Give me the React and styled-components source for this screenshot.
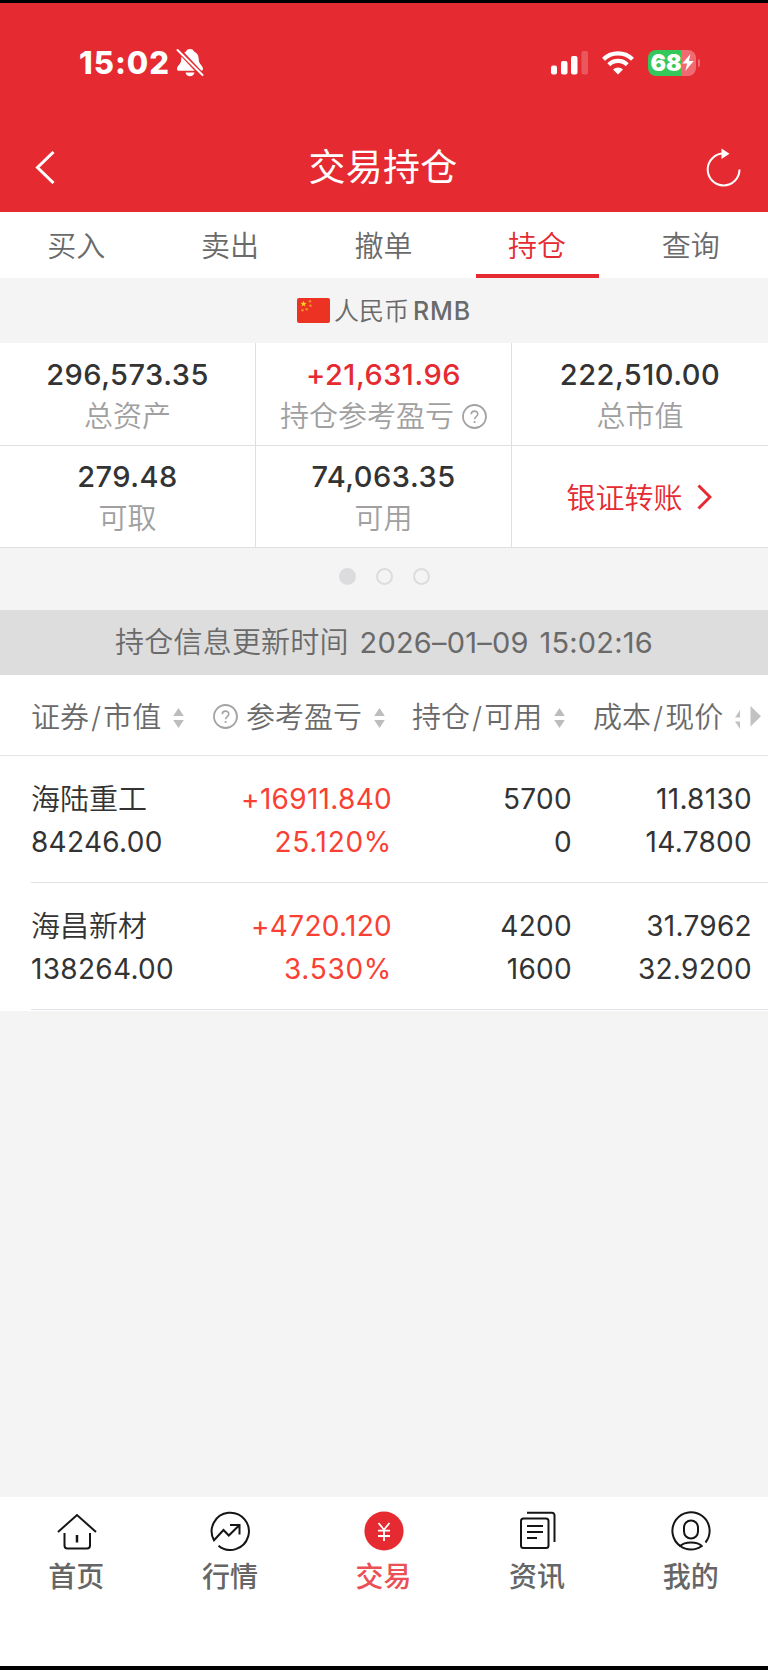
import React, { useState } from 'react';

import styled, { createGlobalStyle, ThemeProvider } from 'styled-components';

const theme = {
  red: '#e52a31',
  rise: '#fa4032',
  ink: '#333333',
  gray: '#6a6a6a',
  silver: '#a0a0a0',
  line: '#dedfe1',
  canvas: '#f4f4f4',
};

const GlobalStyle = createGlobalStyle`
  * {
    box-sizing: border-box;
  }

  body {
    background: #000;
    font-family: Inter, "Noto Sans CJK SC", sans-serif;
    font-size: 29px;
    font-weight: 350;
    margin: 0;
  }

  svg {
    display: block;
    flex: none;
  }
`;

const Screen = styled.div`
  background: ${(props) => props.theme.canvas};
  border-bottom: 4px solid black;
  border-top: 3px solid black;
  display: flex;
  flex-direction: column;
  height: 1670px;
  overflow: hidden;
  width: 768px;
`;

const Header = styled.header`
  background: ${(props) => props.theme.red};
  color: white;
  flex: none;
  height: 209px;
`;

const StatusBar = styled.div`
  align-items: center;
  display: flex;
  height: 119px;
  padding: 0 72px 0 79px;
`;

const Clock = styled.span`
  align-items: center;
  display: flex;
  font-size: 31px;
  font-weight: 800;
  gap: 6px;
  letter-spacing: 1px;
  line-height: 36px;
  margin-right: auto;
`;

const Indicators = styled.div`
  align-items: center;
  display: flex;
  gap: 14px;
`;

const Battery = styled.div`
  align-items: center;
  background: linear-gradient(90deg, #34c759 68%, #ef6b71 68%);
  border-radius: 8px;
  display: flex;
  height: 26px;
  justify-content: center;
  position: relative;
  width: 48px;

  &::after {
    background: #ef6b71;
    border-radius: 0 3px 3px 0;
    content: '';
    height: 8px;
    left: 50px;
    position: absolute;
    top: 9px;
    width: 2px;
  }
`;

const Level = styled.span`
  font-size: 23px;
  font-weight: 900;
  line-height: 26px;
`;

const TitleBar = styled.div`
  align-items: center;
  display: flex;
  height: 90px;
  justify-content: space-between;
  padding: 0 27px 0 35px;
`;

const Title = styled.h1`
  font-size: 37px;
  font-weight: 400;
  letter-spacing: .3px;
  line-height: 44px;
  margin: 0;
  padding: 2px 0 0 5px;
`;

const Tabs = styled.nav`
  background: white;
  display: flex;
  flex: none;
  height: 66px;
`;

const Tab = styled.button`
  align-items: center;
  background: none;
  border: none;
  color: ${(props) => (props.$active ? props.theme.red : props.theme.gray)};
  display: flex;
  flex: 1;
  font: inherit;
  justify-content: center;
  padding: 0 1px 3px 0;
  position: relative;

  &::after {
    background: ${(props) => (props.$active ? props.theme.red : 'transparent')};
    bottom: 0;
    content: '';
    height: 4px;
    left: 10%;
    position: absolute;
    right: 10%;
  }
`;

const Currency = styled.div`
  align-items: center;
  color: ${(props) => props.theme.gray};
  display: flex;
  flex: none;
  font-size: 25px;
  gap: 4px;
  height: 65px;
  justify-content: center;
  line-height: 30px;
`;

const CurrencyCode = styled.span`
  font-weight: 500;
  letter-spacing: .9px;
`;

const Summary = styled.section`
  background: white;
  display: grid;
  flex: none;
  grid-template-columns: repeat(3, 256px);
  grid-template-rows: 103px 102px;
`;

const Cell = styled.div`
  align-items: center;
  border-bottom: 1px solid ${(props) => props.theme.line};
  border-right: 1px solid ${(props) => props.theme.line};
  display: flex;
  flex-direction: column;
  justify-content: center;
  padding-top: 1px;

  &:nth-child(-n + 3) {
    padding-top: 2px;
  }

  &:nth-child(3n) {
    border-right: none;
  }
`;

const Amount = styled.div`
  color: ${(props) => (props.$rise ? props.theme.red : props.theme.ink)};
  font-size: 29px;
  font-weight: 450;
  letter-spacing: .5px;
  line-height: 42px;
`;

const Caption = styled.div`
  align-items: center;
  color: ${(props) => props.theme.silver};
  display: flex;
  gap: 8px;
  line-height: 41px;
`;

const Transfer = styled.a`
  align-items: center;
  color: ${(props) => props.theme.red};
  display: flex;
  gap: 14px;
  padding: 0 2px 2px 0;

  svg {
    margin-top: 2px;
  }
`;

const Dots = styled.div`
  align-items: center;
  display: flex;
  flex: none;
  gap: 20px;
  height: 62px;
  justify-content: center;
  padding-bottom: 5px;
`;

const Dot = styled.span`
  background: ${(props) => (props.$active ? '#dcdcde' : 'transparent')};
  border: 2px solid #dcdcde;
  border-radius: 50%;
  height: 17px;
  width: 17px;
`;

const UpdatedAt = styled.div`
  background: #dddddd;
  color: ${(props) => props.theme.gray};
  flex: none;
  height: 65px;
  letter-spacing: .2px;
  line-height: 65px;
  text-align: center;
  white-space: pre;
  word-spacing: 2.5px;
`;

const Time = styled.time`
  font-weight: 400;
`;

const TableHead = styled.div`
  background: white;
  border-bottom: 1px solid #e4e5e6;
  color: ${(props) => props.theme.gray};
  display: grid;
  flex: none;
  grid-template-columns: 182px 199px 181px 1fr;
  height: 81px;
  padding: 0 8px 0 31px;
`;

const HeadCell = styled.div`
  align-items: center;
  display: flex;
  gap: 8px;
  white-space: nowrap;

  svg {
    margin-top: 2px;
  }

  svg:last-child {
    margin: 5px 0 0 4px;
  }
`;

const Slash = styled.span`
  margin: 0 2px;

  &::before {
    content: '/';
  }
`;

const Rows = styled.div`
  background: white;
  flex: none;
  padding: 0 0 1px 31px;
`;

const Row = styled.div`
  align-items: center;
  border-bottom: 1px solid #e1e2e8;
  display: grid;
  grid-template-columns: 181px 180px 180px 180px;
  height: 127px;
  padding-top: 3px;
`;

const Pair = styled.div`
  color: ${(props) => (props.$rise ? props.theme.rise : props.theme.ink)};
  font-size: 28px;
  font-weight: 400;
  letter-spacing: .3px;
  line-height: 43px;
  text-align: ${(props) => (props.$left ? 'left' : 'right')};
`;

const StockName = styled.div`
  font-size: 29px;
  font-weight: 350;
  letter-spacing: 0;
`;

const Percent = styled.div`
  letter-spacing: .7px;
`;

const BottomNav = styled.nav`
  background: white;
  display: flex;
  flex: none;
  height: 169px;
  margin-top: auto;
`;

const NavItem = styled.a`
  align-items: center;
  color: ${(props) => (props.$active ? '#ea5055' : '#666666')};
  display: flex;
  flex: 1;
  flex-direction: column;
  font-size: 28px;
  font-weight: 500;
  line-height: 40px;
  padding: 14px 1px 0 0;

  svg {
    margin: 0 0 6px 1px;
  }
`;

const MutedBell = () => (
  <svg width="28" height="29" viewBox="0 0 28 29" fill="white">
    <path d="M14 1c-2 0-3.300.8-4 2.500C6.500 5 5.200 8 5.200 12c0 4-4.200 5.500-4.200 9 0 1.200.8 1.800 2 1.800h22c1.200 0 2-.6 2-1.800 0-3.500-4.200-5-4.200-9 0-4-1.300-7-4.800-8.500C17.300 1.800 16 1 14 1z" />
    <path d="M9.500 24.500h9c-.4 2.300-2.200 3.700-4.500 3.700s-4.100-1.400-4.500-3.700z" />
    <path d="M1 .5L27 28" stroke="#e52a31" strokeWidth="5" />
    <path d="M1.500 2L26.500 27" stroke="white" strokeWidth="2" strokeLinecap="round" />
  </svg>
);

const Signal = () => (
  <svg width="37" height="24" viewBox="0 0 37 24" fill="white">
    <rect x="0" y="14.500" width="6" height="9" rx="2" />
    <rect x="10" y="10" width="6.500" height="13.500" rx="2" />
    <rect x="20" y="5" width="6.500" height="18.500" rx="2" />
    <rect x="30.500" y="0" width="6.500" height="23.500" rx="2" opacity=".22" />
  </svg>
);

const Wifi = () => (
  <svg width="32" height="24" viewBox="0 0 32 24" fill="none" stroke="white">
    <path d="M1.500 8.200a20.800 20.800 0 0 1 29 0" strokeWidth="4.200" />
    <path d="M6.800 13.700a13.200 13.200 0 0 1 18.400 0" strokeWidth="4.200" />
    <path d="M16 23.500l-5-5.100a7.200 7.200 0 0 1 10 0z" fill="white" stroke="none" />
  </svg>
);

const Bolt = () => (
  <svg width="12" height="17" viewBox="0 0 12 17" fill="white">
    <path d="M8.500 0L.3 9.500h4.900L3.300 17 11.700 7H6.900z" />
  </svg>
);

const Back = () => (
  <svg width="20" height="33" viewBox="0 0 20 33" fill="none" stroke="white" strokeWidth="3">
    <path d="M18.500 1L2.500 16.500l16 15.500" />
  </svg>
);

const Refresh = () => (
  <svg width="35" height="40" viewBox="0 0 35 40">
    <path d="M33.500 22.500a15.900 15.900 0 1 1-15.900-15.900" fill="none" stroke="white" strokeWidth="2" />
    <path d="M15.500 1.500L23.500 6.700l-8 5.300z" fill="white" />
  </svg>
);

const Flag = () => (
  <svg width="33" height="25" viewBox="0 0 33 25">
    <rect width="33" height="25" rx="2" fill="#ec3323" />
    <path d="M6.500 2.800l.8 2 2.200.1-1.700 1.400.6 2.100-1.900-1.200-1.900 1.200.6-2.100-1.700-1.400 2.200-.1z" fill="#f9d616" />
    <g fill="#f0932a">
      <circle cx="13" cy="3.200" r="1.200" />
      <circle cx="13.500" cy="7.800" r="1.200" />
      <circle cx="9.700" cy="11.200" r="1.200" />
      <circle cx="5.500" cy="12.300" r="1.200" />
    </g>
  </svg>
);

const Help = () => (
  <svg width="25" height="25" viewBox="0 0 25 25" fill="none" stroke="#a3a3a3">
    <circle cx="12.500" cy="12.500" r="11.500" strokeWidth="1.800" />
    <path d="M9.300 10.300c0-4.200 6.500-4.200 6.500-.2 0 2.400-3.200 2.500-3.200 5.200" strokeWidth="1.600" />
    <circle cx="12.600" cy="18" r="1.100" fill="#a3a3a3" stroke="none" />
  </svg>
);

const Chevron = () => (
  <svg width="15" height="26" viewBox="0 0 15 26" fill="none" stroke="#e52a31" strokeWidth="3">
    <path d="M1.500 1.500L13 13 1.500 24.500" />
  </svg>
);

const Sort = () => (
  <svg width="11" height="20" viewBox="0 0 11 20" fill="#bdbdbd">
    <path d="M5.500 0L10.800 8H.2zM5.500 20L.2 12h10.600z" />
  </svg>
);

// last column: sort mark is clipped by the scroll arrow
const SortMore = () => (
  <svg width="27" height="24" viewBox="0 0 27 24" fill="#c2c2c2">
    <path d="M5 4V11.500H0zM5 23V15.500H0zM15.500 0L26 10.300 15.500 20.500z" />
  </svg>
);

const Home = () => (
  <svg width="40" height="40" viewBox="0 0 40 40" fill="none" stroke="#151515" strokeWidth="2">
    <path d="M1 21L20 4l19 17M7.500 22v12.500a3 3 0 0 0 3 3h19.500a3 3 0 0 0 3-3V22" />
    <path d="M20 24v7.500" strokeWidth="2.500" />
  </svg>
);

const Market = () => (
  <svg width="40" height="40" viewBox="0 0 40 40" fill="none" stroke="#151515" strokeWidth="2">
    <path d="M8.500 34.700A18.600 18.600 0 1 0 4 29.300L13.500 19l5.300 5.500L29 14.500M20 14h9.500v9.500" />
  </svg>
);

const Trade = () => (
  <svg width="40" height="40" viewBox="0 0 40 40">
    <circle cx="20" cy="20" r="19.600" fill="#e52a31" />
    <path d="M14.500 12l5.500 6.700 5.500-6.700M14 19.700h12M14 25h12M20 18.500V30" fill="none" stroke="white" strokeWidth="1.800" />
  </svg>
);

const News = () => (
  <svg width="40" height="40" viewBox="0 0 40 40" fill="none" stroke="#151515" strokeWidth="2">
    <rect x="3" y="7.500" width="27.500" height="29.500" rx="2.500" />
    <path d="M9 1.800h25a2.500 2.500 0 0 1 2.500 2.500V31" />
    <path d="M9 15h16M9 21h16M9 27h10" />
  </svg>
);

const Profile = () => (
  <svg width="40" height="40" viewBox="0 0 40 40" fill="none" stroke="#151515" strokeWidth="2">
    <path d="M34.500 31.500A18.600 18.600 0 1 0 9.500 35.200" />
    <rect x="13" y="9.500" width="14" height="18" rx="7" />
    <path d="M9.300 35c3-3.300 6.500-3.500 10.700-3.500s8 .4 10.700 3.500c-6.500 4.700-15 4.700-21.400 0z" />
  </svg>
);

const tabs = ['买入', '卖出', '撤单', '持仓', '查询'];

const holdings = [
  {
    name: '海陆重工',
    value: '84246.00',
    profit: '+16911.840',
    percent: '25.120%',
    amount: '5700',
    available: '0',
    cost: '11.8130',
    price: '14.7800',
  },
  {
    name: '海昌新材',
    value: '138264.00',
    profit: '+4720.120',
    percent: '3.530%',
    amount: '4200',
    available: '1600',
    cost: '31.7962',
    price: '32.9200',
  },
];

const navItems = [
  { label: '首页', Icon: Home },
  { label: '行情', Icon: Market },
  { label: '交易', Icon: Trade, active: true },
  { label: '资讯', Icon: News },
  { label: '我的', Icon: Profile },
];

const App = () => {
  const [activeTab, setActiveTab] = useState('持仓');

  return (
    <ThemeProvider theme={theme}>
      <GlobalStyle />
      <Screen>
        <Header>
          <StatusBar>
            <Clock>15:02<MutedBell /></Clock>
            <Indicators>
              <Signal />
              <Wifi />
              <Battery><Level>68</Level><Bolt /></Battery>
            </Indicators>
          </StatusBar>
          <TitleBar>
            <Back />
            <Title>交易持仓</Title>
            <Refresh />
          </TitleBar>
        </Header>
        <Tabs>
          {tabs.map((tab) => (
            <Tab key={tab} $active={tab === activeTab} onClick={() => setActiveTab(tab)}>
              {tab}
            </Tab>
          ))}
        </Tabs>
        <Currency>
          <Flag />
          人民币
          <CurrencyCode>RMB</CurrencyCode>
        </Currency>
        <Summary>
          <Cell><Amount>296,573.35</Amount><Caption>总资产</Caption></Cell>
          <Cell><Amount $rise>+21,631.96</Amount><Caption>持仓参考盈亏<Help /></Caption></Cell>
          <Cell><Amount>222,510.00</Amount><Caption>总市值</Caption></Cell>
          <Cell><Amount>279.48</Amount><Caption>可取</Caption></Cell>
          <Cell><Amount>74,063.35</Amount><Caption>可用</Caption></Cell>
          <Cell><Transfer>银证转账<Chevron /></Transfer></Cell>
        </Summary>
        <Dots>
          <Dot $active />
          <Dot />
          <Dot />
        </Dots>
        <UpdatedAt>持仓信息更新时间 <Time>2026–01–09 15:02:16</Time></UpdatedAt>
        <TableHead>
          <HeadCell><span>证券<Slash />市值</span><Sort /></HeadCell>
          <HeadCell><Help />参考盈亏<Sort /></HeadCell>
          <HeadCell><span>持仓<Slash />可用</span><Sort /></HeadCell>
          <HeadCell><span>成本<Slash />现价</span><SortMore /></HeadCell>
        </TableHead>
        <Rows>
          {holdings.map((item) => (
            <Row key={item.name}>
              <Pair $left><StockName>{item.name}</StockName>{item.value}</Pair>
              <Pair $rise>{item.profit}<Percent>{item.percent}</Percent></Pair>
              <Pair>{item.amount}<br />{item.available}</Pair>
              <Pair>{item.cost}<br />{item.price}</Pair>
            </Row>
          ))}
        </Rows>
        <BottomNav>
          {navItems.map(({ label, Icon, active }) => (
            <NavItem key={label} $active={active}><Icon />{label}</NavItem>
          ))}
        </BottomNav>
      </Screen>
    </ThemeProvider>
  );
};

export default App;
